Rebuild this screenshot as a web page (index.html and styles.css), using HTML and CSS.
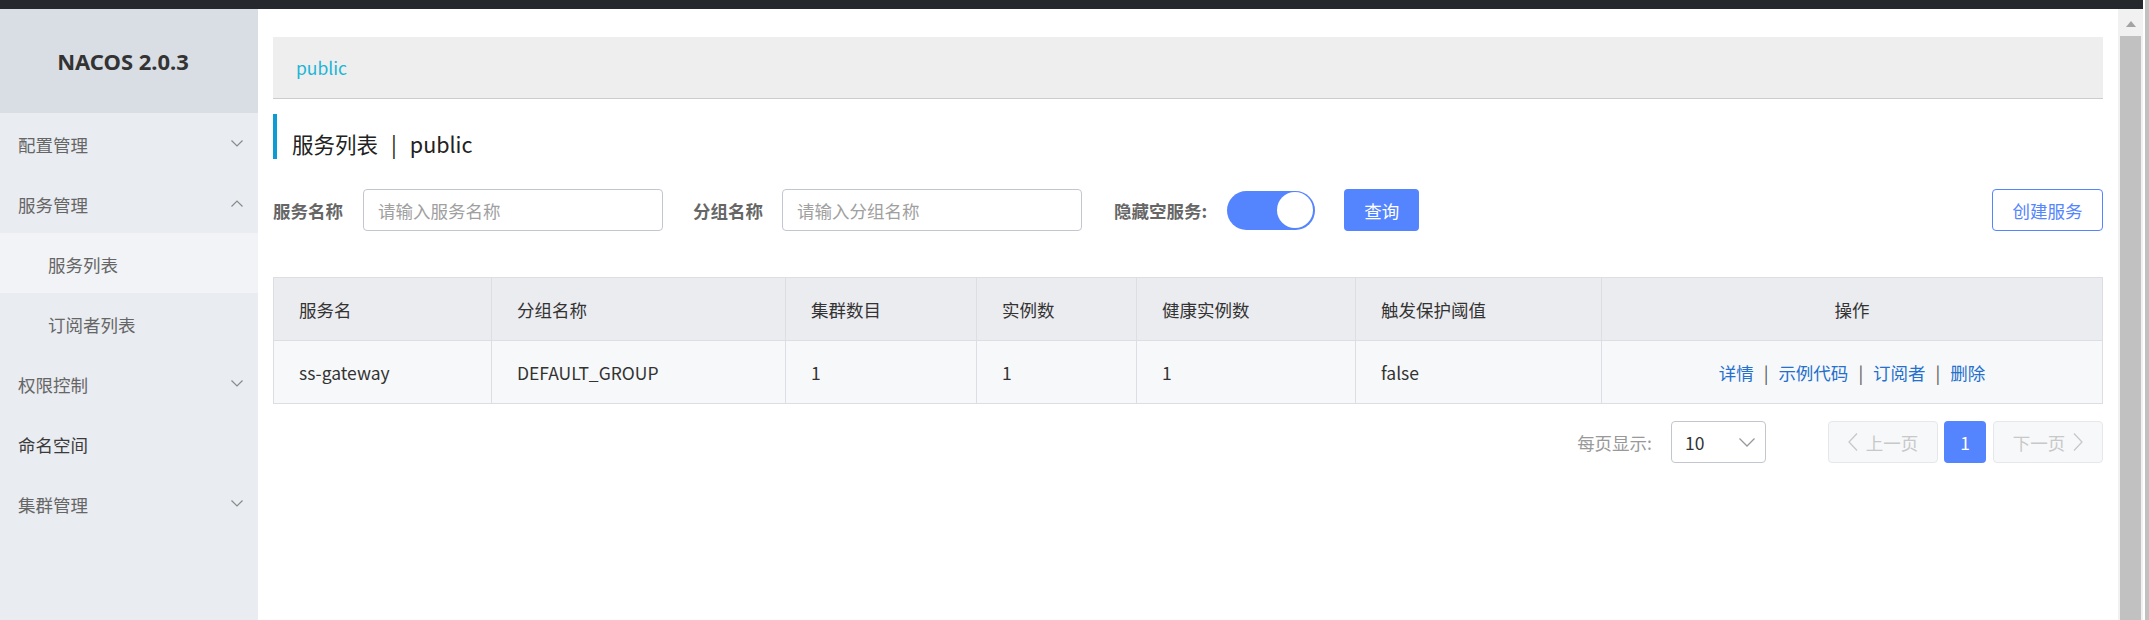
FILE: index.html
```html
<!DOCTYPE html>
<html lang="zh">
<head>
<meta charset="utf-8">
<title>Nacos</title>
<link rel="stylesheet" href="styles.css">
</head>
<body>
<div class="app">
  <div class="frame">
    <div class="topbar"></div>
    <div class="body">
      <aside class="sidebar">
        <div class="brand">NACOS 2.0.3</div>
        <ul class="menu">
          <li class="item"><span>配置管理</span><svg class="chev" width="12" height="7" viewBox="0 0 12 7"><path d="M0.5 0.5 L6 6 L11.5 0.5"/></svg></li>
          <li class="item"><span>服务管理</span><svg class="chev" width="12" height="7" viewBox="0 0 12 7"><path d="M0.5 6.5 L6 1 L11.5 6.5"/></svg></li>
          <li class="item sub active"><span>服务列表</span></li>
          <li class="item sub"><span>订阅者列表</span></li>
          <li class="item"><span>权限控制</span><svg class="chev" width="12" height="7" viewBox="0 0 12 7"><path d="M0.5 0.5 L6 6 L11.5 0.5"/></svg></li>
          <li class="item leaf"><span>命名空间</span></li>
          <li class="item"><span>集群管理</span><svg class="chev" width="12" height="7" viewBox="0 0 12 7"><path d="M0.5 0.5 L6 6 L11.5 0.5"/></svg></li>
        </ul>
      </aside>
      <main class="main">
        <div class="crumb">public</div>
        <div class="title"><span>服务列表</span><span class="bar">|</span><span>public</span></div>
        <div class="filters">
          <label class="flabel">服务名称</label>
          <input class="finput" type="text" placeholder="请输入服务名称">
          <label class="flabel gap">分组名称</label>
          <input class="finput" type="text" placeholder="请输入分组名称">
          <label class="flabel gap2">隐藏空服务:</label>
          <div class="switch"><div class="knob"></div></div>
          <button class="btn-primary">查询</button>
          <div class="spacer"></div>
          <button class="btn-outline">创建服务</button>
        </div>
        <table class="grid">
          <colgroup>
            <col class="c1"><col class="c2"><col class="c3"><col class="c4"><col class="c5"><col class="c6"><col>
          </colgroup>
          <thead>
            <tr><th>服务名</th><th>分组名称</th><th>集群数目</th><th>实例数</th><th>健康实例数</th><th>触发保护阈值</th><th class="center">操作</th></tr>
          </thead>
          <tbody>
            <tr>
              <td>ss-gateway</td><td>DEFAULT_GROUP</td><td>1</td><td>1</td><td>1</td><td>false</td>
              <td class="center ops"><a>详情</a><span class="sep">|</span><a>示例代码</a><span class="sep">|</span><a>订阅者</a><span class="sep">|</span><a>删除</a></td>
            </tr>
          </tbody>
        </table>
        <div class="pager">
          <span class="plabel">每页显示:</span>
          <div class="select"><span>10</span><svg width="16" height="9" viewBox="0 0 16 9"><path d="M0.5 0.5 L8 8 L15.5 0.5"/></svg></div>
          <div class="pbtn prev"><svg width="10" height="18" viewBox="0 0 10 18"><path d="M9 0.5 L1 9 L9 17.5"/></svg><span>上一页</span></div>
          <div class="page">1</div>
          <div class="pbtn next"><span>下一页</span><svg width="10" height="18" viewBox="0 0 10 18"><path d="M1 0.5 L9 9 L1 17.5"/></svg></div>
        </div>
      </main>
      <div class="vscroll">
        <div class="sbtn"><div class="tri"></div></div>
        <div class="thumb"></div>
      </div>
    </div>
  </div>
  <div class="outer"></div>
</div>
</body>
</html>
```
FILE: styles.css
```css
html, body {
  margin: 0;
  padding: 0;
}
body {
  width: 2149px;
  height: 620px;
  overflow: hidden;
  font-family: "Noto Sans CJK SC", "Noto Sans", sans-serif;
  font-size: 17.5px;
  color: #333;
}
.app {
  display: flex;
  height: 620px;
}
.frame {
  width: 2143px;
  display: flex;
  flex-direction: column;
}
.topbar {
  height: 9px;
  flex: none;
  background: #25292e;
}
.body {
  flex: 1;
  display: flex;
  min-height: 0;
}
.sidebar {
  width: 258px;
  flex: none;
  background: #e9ecf1;
}
.brand {
  height: 104px;
  box-sizing: border-box;
  padding-right: 12px;
  background: #d9dde4;
  display: flex;
  align-items: center;
  justify-content: center;
  font-family: "Noto Sans", sans-serif;
  font-weight: bold;
  font-size: 22px;
  color: #333;
}
.menu {
  list-style: none;
  margin: 0;
  padding: 0;
}
.item {
  height: 60px;
  box-sizing: border-box;
  padding: 3px 15px 0 18px;
  display: flex;
  align-items: center;
  justify-content: space-between;
  color: #666;
  line-height: 1;
}
.item .chev {
  margin-top: -3px;
}
.item.sub {
  padding-left: 48px;
}
.item.active {
  background: #f2f3f7;
}
.item.leaf {
  color: #3a3a3a;
}
.chev path {
  fill: none;
  stroke: #8a8a8a;
  stroke-width: 1.2;
}
.main {
  flex: 1;
  min-width: 0;
  background: #fff;
  padding: 28px 15px 0;
}
.crumb {
  height: 62px;
  box-sizing: border-box;
  background: #eeeeee;
  border-bottom: 1px solid #cccccc;
  padding-left: 23px;
  display: flex;
  align-items: center;
  color: #1bb5d6;
  line-height: 1;
}
.title {
  margin-top: 15px;
  height: 45px;
  box-sizing: border-box;
  border-left: 4px solid #0e9bd3;
  padding-left: 15px;
  display: flex;
  align-items: flex-end;
  font-size: 21.5px;
  line-height: 30px;
  color: #222;
}
.title .bar {
  margin: 0 13px;
}
.filters {
  margin-top: 30px;
  height: 42px;
  display: flex;
  align-items: center;
}
.flabel {
  font-weight: bold;
  color: #666;
  margin-right: 20px;
}
.flabel.gap {
  margin-left: 30px;
  margin-right: 19px;
}
.flabel.gap2 {
  margin-left: 32px;
  margin-right: 20px;
}
.finput {
  width: 300px;
  height: 42px;
  box-sizing: border-box;
  border: 1px solid #c4c6cf;
  border-radius: 4px;
  padding: 0 14px;
  font-family: inherit;
  font-size: 17.5px;
  color: #333;
  outline: none;
}
.finput::placeholder {
  color: #a0a0a0;
}
.switch {
  width: 88px;
  height: 39px;
  box-sizing: border-box;
  border-radius: 20px;
  background: #5584ff;
  padding: 1px 2px;
  display: flex;
  justify-content: flex-end;
  align-items: center;
}
.knob {
  width: 36px;
  height: 36px;
  border-radius: 50%;
  background: #fff;
}
.btn-primary {
  margin-left: 29px;
  width: 75px;
  height: 42px;
  border: none;
  border-radius: 4px;
  background: #5584ff;
  color: #fff;
  font-family: inherit;
  font-size: 17.5px;
  padding: 0;
}
.spacer {
  flex: 1;
}
.btn-outline {
  width: 111px;
  height: 42px;
  border: 1px solid #5584ff;
  border-radius: 4px;
  background: #fff;
  color: #5584ff;
  font-family: inherit;
  font-size: 17.5px;
  padding: 0;
}
.grid {
  margin-top: 46px;
  width: 100%;
  border-collapse: collapse;
  table-layout: fixed;
}
.c1 { width: 218px; }
.c2 { width: 294px; }
.c3 { width: 191px; }
.c4 { width: 160px; }
.c5 { width: 219px; }
.c6 { width: 246px; }
.grid th, .grid td {
  height: 62px;
  border: 1px solid #dcdee3;
  padding: 0 25px;
  text-align: left;
  font-weight: normal;
  color: #333;
  line-height: 1.2;
}
.grid th {
  background: #ebecf0;
}
.grid td {
  background: #f7f8fa;
}
.grid .center {
  text-align: center;
}
.ops a {
  color: #2470cc;
}
.ops .sep {
  margin: 0 10px;
  color: #555;
}
.pager {
  margin-top: 17px;
  height: 42px;
  display: flex;
  justify-content: flex-end;
  align-items: center;
}
.plabel {
  color: #999;
  margin-right: 19px;
}
.select {
  width: 95px;
  height: 42px;
  box-sizing: border-box;
  border: 1px solid #c4c6cf;
  border-radius: 4px;
  padding: 0 10px 0 13px;
  display: flex;
  align-items: center;
  justify-content: space-between;
  color: #333;
}
.select path, .pbtn path {
  fill: none;
  stroke-width: 1.3;
}
.select path {
  stroke: #999;
}
.pbtn path {
  stroke: #c8c8c8;
}
.pbtn {
  width: 110px;
  height: 42px;
  box-sizing: border-box;
  border: 1px solid #e6e7eb;
  border-radius: 4px;
  background: #f7f8fa;
  color: #c8c8c8;
  display: flex;
  align-items: center;
  justify-content: center;
  gap: 8px;
}
.prev {
  margin-left: 62px;
}
.page {
  width: 42px;
  height: 42px;
  margin: 0 7px 0 6px;
  border-radius: 4px;
  background: #5584ff;
  color: #fff;
  display: flex;
  align-items: center;
  justify-content: center;
}
.vscroll {
  width: 25px;
  flex: none;
  background: #f1f1f1;
  display: flex;
  flex-direction: column;
  align-items: center;
}
.sbtn {
  height: 27px;
  flex: none;
  box-sizing: border-box;
  padding-top: 12px;
}
.tri {
  width: 0;
  height: 0;
  border-left: 5px solid transparent;
  border-right: 5px solid transparent;
  border-bottom: 6px solid #a3a3a3;
}
.thumb {
  width: 21px;
  flex: 1;
  background: #c1c1c1;
}
.outer {
  width: 6px;
  box-sizing: border-box;
  border-left: 2px solid #fff;
  background: #c1c1c1;
}
```
